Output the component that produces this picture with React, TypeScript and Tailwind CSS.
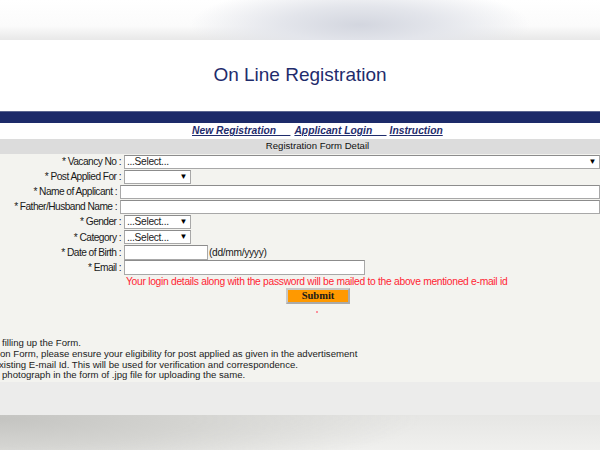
import React from 'react';

const rowLabel = 'w-[122px] text-right pr-[1px] whitespace-nowrap';
const box = 'h-[14px] bg-white border border-[#a8a8a8] border-t-[#8c8c8c]';

const SelectBox: React.FC<{ width: string; text?: string }> = ({ width, text }) => (
  <div className={`${box} ${width} flex items-center justify-between pl-[2px] pr-[3px] text-[10.2px] tracking-[-0.3px] text-[#222]`}>
    <span>{text}</span>
    <span className="text-[8px] leading-none text-black">▼</span>
  </div>
);

const Row: React.FC<{ label: string; children: React.ReactNode }> = ({ label, children }) => (
  <div className="h-[15.15px] flex items-center gap-[2px]">
    <span className={rowLabel}>{label} :</span>
    {children}
  </div>
);

export default function App() {
  return (
    <div className="w-[600px] h-[450px] overflow-hidden bg-[#f3f3ef] font-['Liberation_Sans',Arial,sans-serif] text-[#222] flex flex-col">
      {/* blurred strip above the page */}
      <div className="h-[40px] shrink-0 bg-[radial-gradient(ellipse_170px_40px_at_60%_62%,#d3d6df_0%,#e3e5eb_45%,rgba(255,255,255,0)_100%),linear-gradient(to_bottom,#ffffff_0%,#fbfbfb_65%,#e8e8e8_100%)]" />

      <div className="h-[71px] shrink-0 bg-white flex items-center justify-center">
        <h1 className="text-[19px] text-[#1f2c6c]">On Line Registration</h1>
      </div>

      <div className="h-[12px] shrink-0 bg-[#1c2a69] border-t border-[#5a6590]" />

      <div className="h-[16px] shrink-0 bg-white flex items-center pl-[192px] text-[10.3px] font-bold italic text-[#1f2c6c]">
        <a className="underline whitespace-pre">New Registration     </a>
        <a className="underline whitespace-pre ml-[4px]">Applicant Login     </a>
        <a className="underline ml-[3px]">Instruction</a>
      </div>

      <div className="h-[15px] shrink-0 bg-[#dcdcdc] flex items-center justify-center pl-[35px] text-[9.6px] text-[#111]">
        Registration Form Detail
      </div>

      <div className="flex flex-col text-[10.2px] tracking-[-0.55px] text-[#1a1a1a] shrink-0">
        <Row label="* Vacancy No">
          <SelectBox width="w-[476px]" text="...Select..." />
        </Row>
        <Row label="* Post Applied For">
          <SelectBox width="w-[67px]" />
        </Row>
        <Row label="* Name of Applicant">
          <input className={`${box} w-[480px] shrink-0`} />
        </Row>
        <Row label="* Father/Husband Name">
          <input className={`${box} w-[480px] shrink-0`} />
        </Row>
        <Row label="* Gender">
          <SelectBox width="w-[67px]" text="...Select..." />
        </Row>
        <Row label="* Category">
          <SelectBox width="w-[67px]" text="...Select..." />
        </Row>
        <Row label="* Date of Birth">
          <input className={`${box} w-[84px] h-[15px]`} />
          <span className="ml-[-1px] tracking-[-0.3px]">(dd/mm/yyyy)</span>
        </Row>
        <Row label="* Email">
          <input className={`${box} w-[241px] h-[15px]`} />
        </Row>
        <div className="h-[13px] flex items-center pl-[126px] text-[10.3px] tracking-[-0.3px] text-[#ff2533]">
          Your login details along with the password will be mailed to the above mentioned e-mail id
        </div>
        <div className="flex justify-center pl-[36px]">
          <button className="w-[64px] h-[16px] bg-[#ff9900] border-2 border-[#aaaaaa] border-t-[#c8c8c8] border-l-[#c8c8c8] font-['Liberation_Serif',serif] font-bold text-[10.5px] tracking-normal text-[#1a1a1a] leading-none">
            Submit
          </button>
        </div>
        <div className="flex justify-center pl-[34px] pt-[7px]">
          <span className="w-[2px] h-[2px] rounded-full bg-[#ff7080]" />
        </div>
      </div>

      <div className="mt-[25px] shrink-0 text-[9.6px] leading-[10.7px] text-[#222] whitespace-nowrap">
        <p className="pl-[2px]">filling up the Form.</p>
        <p>on Form, please ensure your eligibility for post applied as given in the advertisement</p>
        <p className="ml-[-1px]">xisting E-mail Id. This will be used for verification and correspondence.</p>
        <p className="pl-[2px]">photograph in the form of .jpg file for uploading the same.</p>
      </div>

      <div className="mt-[1px] h-[33px] shrink-0 bg-[#ececeb]" />
      <div className="flex-1 bg-[radial-gradient(ellipse_420px_60px_at_0%_10%,#c4c4c1_0%,#d4d4d1_45%,rgba(240,240,238,0)_100%),linear-gradient(to_bottom,#e6e6e4,#f0f0ee)]" />
    </div>
  );
}
